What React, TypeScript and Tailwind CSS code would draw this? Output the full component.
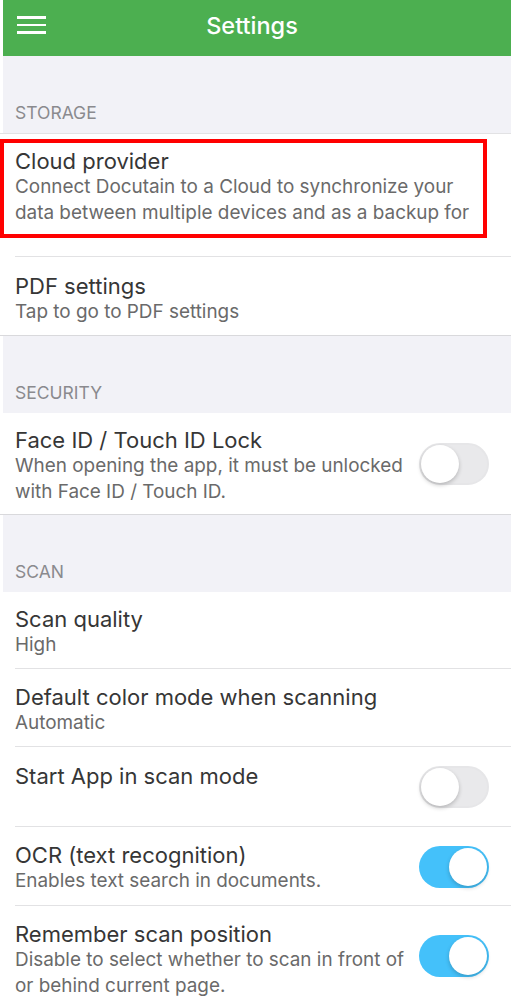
import React from "react";

const font = { fontFamily: "Inter, 'Noto Sans', sans-serif" };

function Toggle({ on }: { on: boolean }) {
  if (on) {
    return (
      <div className="relative h-[42px] w-[70px] shrink-0 rounded-full bg-[#44c1fa]">
        <div className="absolute right-[2px] top-[2px] h-[38px] w-[38px] rounded-full bg-white shadow-[0_2px_4px_rgba(0,0,0,0.2)]" />
      </div>
    );
  }
  return (
    <div className="relative h-[42px] w-[70px] shrink-0 rounded-full border-2 border-[#e6e6e8] bg-[#e9e9eb]">
      <div className="absolute left-[0px] top-[0px] h-[38px] w-[38px] rounded-full bg-white shadow-[0_2px_4px_rgba(0,0,0,0.22)]" />
    </div>
  );
}

function SectionHeader({ label }: { label: string }) {
  return (
    <div className="flex h-[77px] items-end bg-[#f2f2f7] pb-[10px] pl-[12px] text-[17.5px] leading-[20px] text-[#8a8a8e]">
      {label}
    </div>
  );
}

function Row({
  title,
  sub,
  h,
  toggle,
  sep = "inset",
  pt = 16,
}: {
  title: string;
  sub?: string[];
  h: number;
  toggle?: boolean;
  sep?: "inset" | "full" | "none";
  pt?: number;
}) {
  return (
    <div className="relative bg-white" style={{ height: h }}>
      <div className="flex h-full items-center pl-[15px] pr-[22px]">
        <div className="flex-1 self-start" style={{ paddingTop: pt }}>
          <div className="text-[22px] leading-[24px] text-[#363636]">{title}</div>
          {sub &&
            sub.map((s, i) => (
              <div key={i} className="mt-px text-[18.9px] leading-[25px] text-[#6a6a6a]">
                {s}
              </div>
            )).reduce<React.ReactNode[]>((a, el) => [...a, el], [])}
        </div>
        {toggle !== undefined && <Toggle on={toggle} />}
      </div>
      {sep === "inset" && <div className="absolute bottom-0 left-[15px] right-0 h-px bg-[#e2e2e4]" />}
      {sep === "full" && <div className="absolute bottom-0 left-0 right-0 h-px bg-[#d9d9dc]" />}
    </div>
  );
}

export default function App() {
  return (
    <div className="h-[999px] w-[511px] overflow-hidden bg-white pl-[3px]" style={font}>
      <div className="relative flex h-[56px] items-center justify-center bg-[#4caf50] pb-[4px] pr-[10px]">
        <div className="absolute left-[14px] top-[16px] flex w-[29px] flex-col gap-[5px]">
          <div className="h-[2.5px] bg-white" />
          <div className="h-[2.5px] bg-white" />
          <div className="h-[2.5px] bg-white" />
        </div>
        <div className="text-[23.5px] font-medium text-white">Settings</div>
      </div>
      <div className="-ml-[3px]">
        <div className="bg-white pl-[3px]">
          <SectionHeader label="STORAGE" />
        </div>
        <div className="h-px bg-[#e2e2e4]" />
        <div className="relative">
          <Row
            title="Cloud provider"
            sub={["Connect Docutain to a Cloud to synchronize your", "data between multiple devices and as a backup for"]}
            h={123}
            pt={15}
          />
          <div className="absolute left-0 top-[5px] h-[99px] w-[487px] border-[4px] border-[#ff0000]" />
        </div>
        <Row title="PDF settings" sub={["Tap to go to PDF settings"]} h={79} pt={17} sep="full" />
        <div className="bg-white pl-[3px]">
          <SectionHeader label="SECURITY" />
        </div>
        <Row
          title="Face ID / Touch ID Lock"
          sub={["When opening the app, it must be unlocked", "with Face ID / Touch ID."]}
          h={102}
          pt={15}
          toggle={false}
          sep="full"
        />
        <div className="bg-white pl-[3px]">
          <SectionHeader label="SCAN" />
        </div>
        <Row title="Scan quality" sub={["High"]} h={77} pt={15} />
        <Row title="Default color mode when scanning" sub={["Automatic"]} h={78} pt={16} />
        <Row title="Start App in scan mode" h={80} pt={17} toggle={false} />
        <Row title="OCR (text recognition)" sub={["Enables text search in documents."]} h={79} pt={16} toggle={true} />
        <Row
          title="Remember scan position"
          sub={["Disable to select whether to scan in front of", "or behind current page."]}
          h={100}
          pt={16}
          toggle={true}
          sep="none"
        />
      </div>
    </div>
  );
}
